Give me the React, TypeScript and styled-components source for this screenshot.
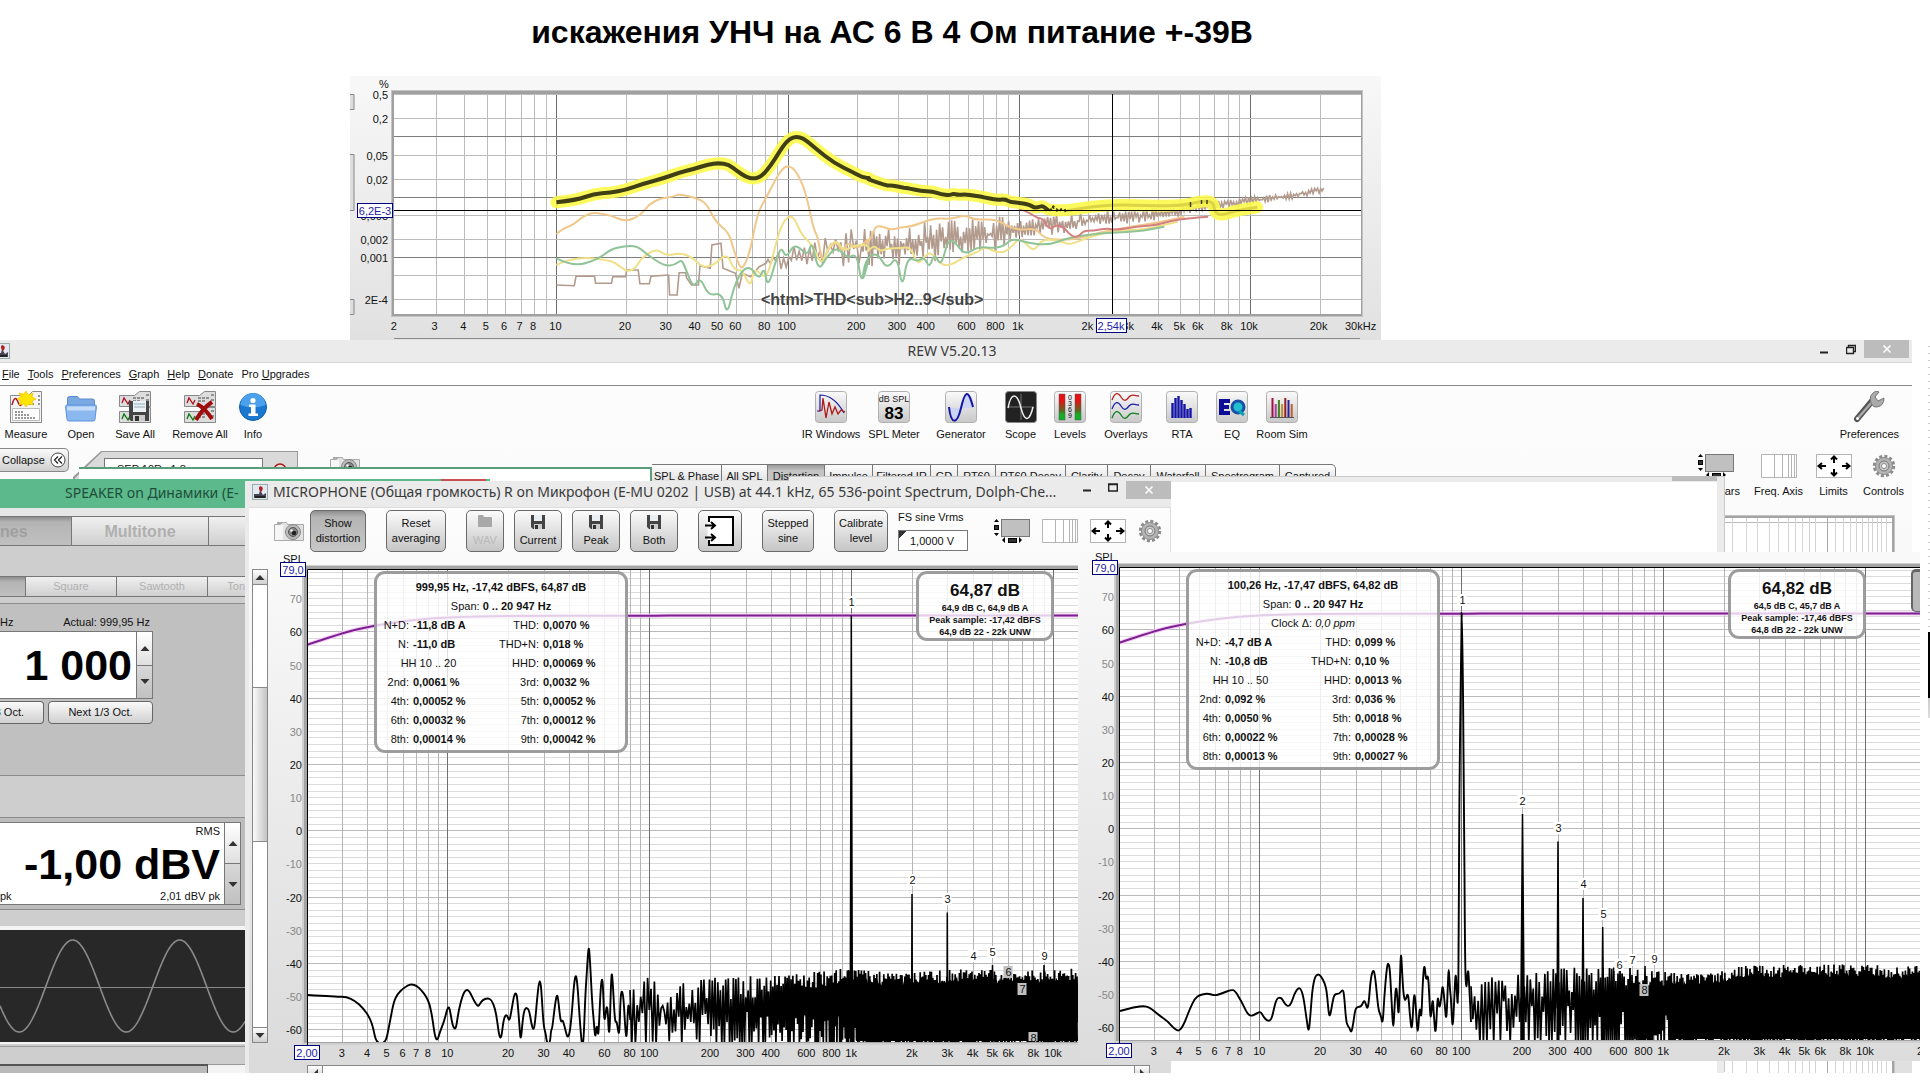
import React from "react";
import styled, { createGlobalStyle, css } from "styled-components";

const Global = createGlobalStyle`
  * { box-sizing: border-box; }
  html, body { margin: 0; padding: 0; background: #fff; }
  body { overflow: hidden; }
  button, input { font: inherit; color: inherit; }
`;

/* ---------- helpers ---------- */

type Pt = [number, number];

const makeRandom = (seed: number) => () => {
  seed = (seed * 1664525 + 1013904223) % 4294967296;
  return seed / 4294967296;
};

const toPath = (pts: Pt[]) =>
  pts.map((p, i) => `${i ? "L" : "M"}${p[0].toFixed(1)} ${p[1].toFixed(1)}`).join("");

const smoothPath = (pts: Pt[]) => {
  let d = `M${pts[0][0].toFixed(1)} ${pts[0][1].toFixed(1)}`;
  for (let i = 1; i < pts.length - 1; i++) {
    const mx = (pts[i][0] + pts[i + 1][0]) / 2;
    const my = (pts[i][1] + pts[i + 1][1]) / 2;
    d += `Q${pts[i][0].toFixed(1)} ${pts[i][1].toFixed(1)} ${mx.toFixed(1)} ${my.toFixed(1)}`;
  }
  const l = pts[pts.length - 1];
  return d + `L${l[0].toFixed(1)} ${l[1].toFixed(1)}`;
};

const pairs = (s: string): Pt[] => s.trim().split(/\s+/).map((p) => p.split(",").map(Number) as Pt);

const interpolate = (pts: Pt[], x: number) => {
  for (let i = 1; i < pts.length; i++) {
    if (x <= pts[i][0]) {
      const [x0, y0] = pts[i - 1];
      const [x1, y1] = pts[i];
      return y0 + ((y1 - y0) * (x - x0)) / (x1 - x0);
    }
  }
  return pts[pts.length - 1][1];
};

const frequencies = (max: number) => {
  const out: number[] = [];
  for (let d = 1; d <= 10000; d *= 10) for (let n = 1; n < 10; n++) if (n * d > 2 && n * d <= max) out.push(n * d);
  return out;
};
const isDecade = (f: number) => [10, 100, 1000, 10000].includes(f);

/* ---------- desktop ---------- */

const Desktop = styled.main`
  position: relative;
  min-height: 100vh;
  overflow: hidden;
  background: #fff;
  color: #111;
  font: 11px/15px "Liberation Sans", Arial, sans-serif;
`;
const Headline = styled.h1`
  margin: 0;
  padding: 12px 146px 0 0;
  text-align: center;
  font-size: 32px;
  line-height: 40px;
  font-weight: bold;
  color: #000;
`;
const Layer = styled.section<{ $x: number; $y: number; $w?: number; $right?: number; $h?: number }>`
  position: absolute;
  left: ${(p) => p.$x}px;
  top: ${(p) => p.$y}px;
  ${(p) => p.$w !== undefined && css`width: ${p.$w}px;`}
  ${(p) => p.$right !== undefined && css`right: ${p.$right}px;`}
  ${(p) => p.$h !== undefined && css`height: ${p.$h}px;`}
  overflow: hidden;
`;
const Block = styled.svg`
  display: block;
  flex: none;
`;

/* ---------- distortion chart ---------- */

const z1 = (s: string): Pt[] => pairs(s).map(([x, y]) => [340 + x / 2.958, y / 3]);
const z2 = (s: string): Pt[] => pairs(s).map(([x, y]) => [860 + x / 2.958, y / 3]);

const thdCurve = [
  ...z1("640,607 700,600 750,582 800,578 845,570 900,550 960,534 1000,519 1050,506 1090,493 1120,489 1150,494 1175,513 1200,531 1225,537 1250,527 1275,495 1300,455 1320,425 1340,411 1360,411 1380,422 1410,448 1460,488 1520,518 1545,532 1568,534"),
  ...z2("20,536 40,543 80,557 95,556 120,562 140,564 180,573 215,574 240,583 265,586 275,581 290,585 310,583 340,587 360,590 400,600 430,598 445,606 465,608 500,613 515,623 528,622 540,617 555,630"),
];
const highlight = [...thdCurve, ...z2("612,632 680,620 760,614 860,618 960,616 1000,605 1045,603 1050,640 1075,645 1110,632 1175,622")];
const harmonics: { color: string; pts: Pt[] }[] = [
  {
    color: "#f0c88c",
    pts: [
      ...z1("640,702 660,685 690,675 720,648 750,637 800,645 845,666 890,645 915,612 950,594 985,591 1000,582 1050,592 1085,610 1110,665 1150,697 1165,750 1185,810 1200,790 1215,745 1235,640 1260,595 1290,535 1310,505 1325,497 1345,507 1370,555 1385,610 1400,685 1415,715 1425,790 1445,745 1470,722 1485,760 1500,725 1530,750 1568,710"),
      ...z2("15,740 35,710 45,680 65,678 90,690 120,682 150,680 210,658 240,655 270,657 310,645 340,660 400,657 440,680 470,690 520,685 545,715 600,720 650,715 700,700 800,680 880,668 960,650"),
    ],
  },
  {
    color: "#f0e088",
    pts: [
      ...z1("640,795 690,770 800,780 830,800 850,815 875,805 890,775 935,745 965,768 1010,758 1045,775 1070,800 1100,800 1145,758 1165,810 1190,810 1215,865 1225,800 1260,840 1280,770 1300,690 1320,652 1342,648 1365,705 1395,730 1425,800 1445,740 1470,720 1490,755 1520,735 1568,735"),
      ...z2("20,760 40,735 60,755 80,745 120,745 150,740 170,795 190,770 210,755 240,795 270,795 310,770 350,755 370,740 410,760 440,750 470,715 490,730 515,755 540,715 600,725 620,735 680,710 760,690 840,690 940,665"),
    ],
  },
  {
    color: "#90c498",
    pts: [
      ...z1("640,775 690,800 760,780 800,748 840,738 880,738 910,765 960,798 990,795 1010,778 1020,800 1045,865 1065,830 1090,888 1130,878 1145,948 1165,860 1190,810 1215,800 1240,840 1255,800 1265,865 1290,780 1305,740 1320,775 1345,728 1385,770 1395,720 1415,815 1440,770 1470,740 1500,775 1530,760 1543,860 1568,760"),
      ...z2("5,855 15,780 50,755 80,810 110,765 125,870 140,770 170,785 190,770 205,805 220,760 240,800 260,720 280,725 310,765 350,740 400,745 430,735 450,715 500,730 560,735 610,715 700,700 820,695 900,680"),
    ],
  },
  { color: "#d48080", pts: z2("470,625 505,640 525,655 540,655 560,690 580,675 600,680 625,708 645,712 660,693 690,692 730,685 760,690 820,680 880,675 920,662 970,655 1030,650") },
];

const brownCurve = (() => {
  const rnd = makeRandom(11);
  const steps = z1(
    "640,855 693,857 698,829 753,829 756,850 803,850 807,830 845,830 848,810 882,810 887,851 915,851 920,829 972,825 975,885 997,885 1003,818 1022,818 1025,833 1040,855 1060,855 1065,797 1095,805 1100,735 1127,730 1133,805 1170,820 1180,865 1190,820 1215,830 1240,800 1260,790"
  );
  const mid: Pt[] = [[766, 262], [790, 258], [830, 250], [865, 247], [928, 242], [978, 237], [1029, 228], [1097, 219], [1150, 215], [1198, 208], [1225, 204], [1249, 201], [1283, 197], [1325, 189]];
  const amp: Pt[] = [[766, 9], [800, 14], [865, 21], [990, 20], [1030, 11], [1100, 8], [1200, 5], [1325, 3]];
  const tail: Pt[] = [];
  let sign = 1;
  for (let x = 768; x < 1325; x += x < 860 ? 2.6 : 1.5) {
    sign = -sign;
    tail.push([x, interpolate(mid, x) + sign * rnd() * interpolate(amp, x)]);
  }
  return toPath([...steps, ...tail]);
})();

const ThdChart = () => {
  const X = (f: number) => 556.4 + 231.2 * Math.log10(f / 10);
  const Y = (v: number) => 137.4 + 60.3 * Math.log10(0.1 / v);
  const yLabels: [number, string][] = [[0.5, "0,5"], [0.2, "0,2"], [0.05, "0,05"], [0.02, "0,02"], [0.005, "0,005"], [0.002, "0,002"], [0.001, "0,001"], [0.0002, "2E-4"]];
  const xLabels: [number, string][] = [
    [2, "2"], [3, "3"], [4, "4"], [5, "5"], [6, "6"], [7, "7"], [8, "8"], [10, "10"], [20, "20"], [30, "30"], [40, "40"], [50, "50"], [60, "60"], [80, "80"],
    [100, "100"], [200, "200"], [300, "300"], [400, "400"], [600, "600"], [800, "800"], [1000, "1k"], [2000, "2k"], [3000, "3k"], [4000, "4k"], [5000, "5k"], [6000, "6k"], [8000, "8k"], [10000, "10k"], [20000, "20k"],
  ];
  const dashes = z2("555,630 558,622 566,632 572,622 582,630 588,624 600,634 612,630");
  return (
    <Block width="1031" height="264" viewBox="350 76 1031 264" fontSize="11" fill="#111">
      <defs>
        <linearGradient id="thdBg" x2="0" y2="1">
          <stop offset="0" stopColor="#f8f8f8" />
          <stop offset="1" stopColor="#e1e1e1" />
        </linearGradient>
        <clipPath id="thdClip"><rect x="394" y="94" width="967" height="220" /></clipPath>
      </defs>
      <rect x="350" y="76" width="1031" height="264" fill="url(#thdBg)" />
      <path d="M350 94.5h4v15h-4M350 154.5h4v56h-4M350 299.5h4v15h-4" fill="#ddd" stroke="#888" />
      <rect x="391" y="90" width="972" height="227" fill="#c4c4c4" />
      <rect x="392" y="91" width="970" height="225" fill="#a0a0a0" />
      <rect x="394" y="94" width="967" height="220" fill="#fff" />
      <g clipPath="url(#thdClip)" fill="none">
        {frequencies(20000).map((f) => (
          <path key={f} d={`M${Math.round(X(f)) + 0.5} 94v220`} stroke={isDecade(f) ? "#6e6e6e" : "#bcbcbc"} />
        ))}
        {[0.5, 0.2, 0.1, 0.05, 0.02, 0.01, 0.005, 0.002, 0.001, 0.0005, 0.0002].map((v) => (
          <path key={v} d={`M394 ${Math.round(Y(v)) - 0.5}h967`} stroke={[0.1, 0.01, 0.001].includes(v) ? "#7c7c7c" : "#bcbcbc"} />
        ))}
        <path d={brownCurve} stroke="#b29a8c" strokeWidth="1.600" />
        {harmonics.map((h) => (
          <path key={h.color} d={smoothPath(h.pts)} stroke={h.color} strokeWidth="2" />
        ))}
        <path d={smoothPath(highlight)} stroke="#fbf84a" strokeWidth="12" strokeLinecap="round" strokeLinejoin="round" opacity="0.9" />
        <path d={smoothPath(highlight.slice(thdCurve.length))} stroke="#dcd444" strokeWidth="3" />
        <path d={smoothPath(thdCurve)} stroke="#403e14" strokeWidth="4" strokeLinejoin="round" />
        <path d={toPath(dashes)} stroke="#403e14" strokeWidth="3" strokeDasharray="2 3" />
        <path d="M1190.500 202v5M1201.500 200v4M1207 200v4" stroke="#403e14" strokeWidth="1.500" />
        <path d="M394 210.500h967M1112.500 94v222" stroke="#000" />
        <text x="761" y="305" fontSize="16" fontWeight="bold" fill="#444">{"<html>THD<sub>H2..9</sub>"}</text>
      </g>
      <path d="M394 338.500h966" stroke="#888" />
      <text x="379" y="88">%</text>
      {yLabels.map(([v, t]) => <text key={t} x="388" y={Y(v) + 4} textAnchor="end">{t}</text>)}
      {xLabels.map(([f, t]) => <text key={t} x={X(f) - 1} y="330" textAnchor="middle">{t}</text>)}
      <text x="1345" y="330">30kHz</text>
      <g fill="#fff" stroke="#000080"><rect x="357.500" y="203.500" width="35" height="14" /><rect x="1096.500" y="318.500" width="30" height="14" /></g>
      <g fill="#2222aa" textAnchor="middle"><text x="375" y="215">6,2E-3</text><text x="1111" y="330">2,54k</text></g>
    </Block>
  );
};

/* ---------- spectrum ---------- */

type Row = [string, string, string, string];
interface SpectrumData {
  id: string;
  width: number;
  plotWidth: number;
  low: Pt[];
  seed: number;
  noiseFrom: number;
  top: Pt[];
  solidFrom: number;
  peaks: [number, number, number][];
  marks: [string, number, number, boolean?][];
  header: string;
  clock?: string;
  hh: string;
  rows: Row[];
  level: [string, string, string, string];
}

const SpectrumFrame = styled.div<{ $w: number }>`
  position: relative;
  flex: none;
  width: ${(p) => p.$w}px;
`;
const FloatingBox = styled.div<{ $x: number; $w: number; $h: number }>`
  position: absolute;
  left: ${(p) => p.$x}px;
  top: 17px;
  width: ${(p) => p.$w}px;
  height: ${(p) => p.$h}px;
  border: 3px solid rgba(140, 140, 140, 0.85);
  border-radius: 11px;
  background: rgba(255, 255, 255, 0.78);
  text-align: center;
  white-space: nowrap;
`;
const Line = styled.div`
  line-height: 19px;
`;
const ReadingBox = styled(FloatingBox)`
  padding-top: 4px;
`;
const Readings = styled.table`
  border-collapse: collapse;
  table-layout: fixed;
  width: 100%;
  line-height: 19px;
  td, th { padding: 0; text-align: left; font-weight: bold; }
  th { text-align: right; font-weight: normal; padding-right: 4px; }
`;
const HhCell = styled.th`
  && { text-align: center; padding: 0; }
`;
const LevelBox = styled(FloatingBox)`
  padding-top: 7px;
  font-weight: bold;
  font-size: 9px;
  line-height: 12px;
`;
const BigLevel = styled.div`
  font-size: 17px;
  line-height: 20px;
  padding-bottom: 1px;
`;

const purple: Pt[] = pairs("39.3,90.7 74.7,78.7 105,71.7 138.7,66.7 180,63 239,61.7 382,61.8 420,61.3 840,61.5");

const Spectrum = ({ data }: { data: SpectrumData }) => {
  const X = (f: number) => 180.3 + 201.9 * Math.log10(f / 10);
  const Y = (db: number) => 276.3 - 3.315 * db;
  const left = 39.5;
  const right = data.plotWidth;
  const bottom = 487;
  const rnd = makeRandom(data.seed);
  const noise: Pt[] = [];
  for (let x = data.noiseFrom; x < right; ) {
    const k = Math.min(1, (x - data.noiseFrom) / 210);
    noise.push([x, interpolate(data.top, x) - 2 + Math.pow(rnd(), 1.2) * (34 - 20 * k)]);
    x += 1.8 - 1.1 * k;
    noise.push([x, Math.min(bottom + 4, 444 + 18 * k + rnd() * (64 + 10 * k))]);
    x += 1.8 - 1.1 * k;
  }
  const solid: Pt[] = [[data.solidFrom, bottom]];
  for (let x = data.solidFrom; x < right; x += 1.2) solid.push([x, interpolate(data.top, x) + 6 + rnd() * 6]);
  solid.push([right, bottom]);
  const lines: number[] = [];
  for (let db = 78; db >= -62; db -= 2) lines.push(db);
  const yTicks = [70, 60, 50, 40, 30, 20, 10, 0, -10, -20, -30, -40, -50, -60];
  const xTicks: [number, string][] = [
    [3, "3"], [4, "4"], [5, "5"], [6, "6"], [7, "7"], [8, "8"], [10, "10"], [20, "20"], [30, "30"], [40, "40"], [60, "60"], [80, "80"], [100, "100"],
    [200, "200"], [300, "300"], [400, "400"], [600, "600"], [800, "800"], [1000, "1k"], [2000, "2k"], [3000, "3k"], [4000, "4k"], [5000, "5k"], [6000, "6k"], [8000, "8k"], [10000, "10k"], [20000, "20k"],
  ].filter(([f]) => X(f as number) < data.width + 10) as [number, string][];
  const clip = `clip-${data.id}`;
  return (
    <SpectrumFrame $w={data.width}>
      <Block width={data.width} height="509" fontSize="11" fill="#111">
        <defs><clipPath id={clip}><rect x={left} y="15" width={right - left} height="473" /></clipPath></defs>
        <rect x="34" y="11" width={right - 34} height="480" fill="#cfcfcf" />
        <rect x="36" y="12" width={right - 36} height="477" fill="#a4a4a4" />
        <rect x={left} y="15" width={right - left} height="473" fill="#fff" />
        <g clipPath={`url(#${clip})`} fill="none">
          {lines.map((db) => <path key={db} d={`M${left} ${Math.round(Y(db)) + 0.5}H${right}`} stroke={db % 20 === 0 ? "#bababa" : "#dcdcdc"} />)}
          {frequencies(10000).map((f) => <path key={f} d={`M${Math.round(X(f)) - 0.5} 15v473`} stroke={isDecade(f) ? "#707070" : "#b6b6b6"} />)}
          <path d={smoothPath(purple)} stroke="#f4c8f4" strokeWidth="4" />
          <path d={smoothPath(purple)} stroke="#7c2290" strokeWidth="2" />
          <path d={smoothPath(data.low)} stroke="#000" strokeWidth="1.900" />
          <path d={toPath(noise)} stroke="#000" strokeWidth="1.700" />
          <path d={toPath(solid)} fill="#000" />
          {data.peaks.map(([x, y, w]) => <path key={x} d={`M${x} ${y}L${x + w} 440V488H${x - w}V440Z`} fill="#000" stroke="#000" strokeWidth="1.500" />)}
        </g>
        <path d={`M39.500 492V15.500H${right}`} fill="none" stroke="#000" />
        {data.marks.map(([t, x, y, dark]) => (
          <g key={t}>
            <rect x={x - 5} y={y - 6} width="9" height={Math.min(12, 487 - y + 6)} fill={dark ? "#c0c0c0" : "#fff"} />
            <text x={x} y={y + 4} textAnchor="middle">{t}</text>
          </g>
        ))}
        <text x="15" y="9">SPL</text>
        {yTicks.map((db) => <text key={db} x="34" y={Y(db) + 5} textAnchor="end" fill={db % 20 === 0 ? "#111" : "#888"}>{db}</text>)}
        {xTicks.map(([f, t]) => <text key={t} x={X(f) - 1} y="503" textAnchor="middle">{t}</text>)}
        <g fill="#fff" stroke="#000080"><rect x="12.500" y="8.500" width="25" height="14" /><rect x="26.500" y="491.500" width="25" height="14" /></g>
        <g fill="#2222aa" textAnchor="middle"><text x="25" y="20">79,0</text><text x="39" y="503">2,00</text></g>
      </Block>
      <ReadingBox $x={106} $w={254} $h={data.clock ? 201 : 182}>
        <Line><b>{data.header}</b></Line>
        <Line>Span: <b>0 .. 20 947 Hz</b></Line>
        {data.clock && <Line>Clock Δ: <i>{data.clock}</i></Line>}
        <Readings>
          <colgroup><col width="36" /><col width="67" /><col width="63" /><col /></colgroup>
          <tbody>
            {data.rows.map(([a, b, c, d]) => (
              <tr key={c}>
                {a === "HH" ? <HhCell colSpan={2}>{data.hh}</HhCell> : <><th>{a}</th><td>{b}</td></>}
                <th>{c}</th>
                <td>{d}</td>
              </tr>
            ))}
          </tbody>
        </Readings>
      </ReadingBox>
      <LevelBox $x={648} $w={138} $h={70}>
        <BigLevel>{data.level[0]}</BigLevel>
        {data.level.slice(1).map((t) => <div key={t}>{t}</div>)}
      </LevelBox>
    </SpectrumFrame>
  );
};

const first: SpectrumData = {
  id: "a",
  width: 812,
  plotWidth: 810,
  low: pairs(
    "203,705 290,710 320,711 345,722 370,745 390,775 400,805 409,850 437,850 447,800 460,730 472,702 490,685 505,675 515,673 530,677 545,692 558,708 570,735 578,780 585,830 592,842 600,815 612,785 622,745 628,740 634,775 640,803 648,808 656,750 668,705 678,688 688,693 702,722 713,739 718,735 727,720 743,714 755,720 765,745 772,785 778,830 784,835 790,785 796,765 802,766 808,785 814,755 822,705 828,698 832,715 838,790 842,848 848,780 853,750 860,742 868,752 874,790 880,812 885,790 891,720 897,664 902,664 906,720 911,800 917,820 921,850 930,850 933,810 937,805 944,740 950,705 954,710 962,790 968,778 975,805 982,833 988,825 994,780 1002,670 1008,640 1013,680 1020,790 1026,860 1030,860 1035,730 1040,640 1046,550 1050,600 1056,720 1061,780 1066,840 1070,790 1074,825 1076,815 1082,680 1087,650 1090,700 1093,800 1102,715 1108,860 1114,630 1118,660 1125,790 1130,780 1138,840 1142,690 1150,700 1156,810 1160,840 1165,715 1171,780"
  ).map(([x, y]) => [x / 3 - 28, y / 3 + 206]),
  seed: 5,
  noiseFrom: 362,
  top: [[362, 432], [375, 430], [382, 422], [390, 430], [420, 427], [480, 424], [560, 419], [583, 415], [620, 421], [700, 417], [760, 418], [810, 416]],
  solidFrom: 588,
  peaks: [[583.3, 61.5, 1], [644, 340, 0.3], [679.3, 358.4, 0.3], [724.5, 411, 0.5], [776, 411, 0.5]],
  marks: [["1", 583.5, 48], ["2", 644.5, 326], ["3", 679.5, 345], ["4", 705.5, 402], ["5", 724.5, 398], ["6", 740.5, 418, true], ["7", 754.5, 435, true], ["8", 765.5, 484, true], ["9", 776.5, 402]],
  header: "999,95 Hz, -17,42 dBFS, 64,87 dB",
  hh: "HH 10 .. 20",
  rows: [
    ["N+D:", "-11,8 dB A", "THD:", "0,0070 %"],
    ["N:", "-11,0 dB", "THD+N:", "0,018 %"],
    ["HH", "", "HHD:", "0,00069 %"],
    ["2nd:", "0,0061 %", "3rd:", "0,0032 %"],
    ["4th:", "0,00052 %", "5th:", "0,00052 %"],
    ["6th:", "0,00032 %", "7th:", "0,00012 %"],
    ["8th:", "0,00014 %", "9th:", "0,00042 %"],
  ],
  level: ["64,87 dB", "64,9 dB C, 64,9 dB A", "Peak sample: -17,42 dBFS", "64,9 dB 22 - 22k UNW"],
};

/* The fundamental at 100 Hz is wide enough to show both of its flanks. */
const fundamental: Pt[] = [[378, 440], [378.5, 440], [379.3, 238], [381.7, 61], [381.7, 61], [382.2, 61], [384, 238], [385, 410], [386.3, 442], [388, 412], [389.5, 440], [391, 470]];

const second: SpectrumData = {
  id: "b",
  width: 840,
  plotWidth: 840,
  low: [
    ...pairs(
      "120,663 150,655 180,649 200,649 215,657 240,678 262,693 280,713 293,723 303,718 315,695 330,655 345,625 358,615 382,610 406,617 425,610 455,599 465,602 485,635 500,668 512,679 525,673 541,664 548,675 556,688 568,694 576,683 582,655 590,626 600,622 607,628 617,645 626,649 634,640 643,612 655,593 664,598 672,630 680,690 686,730 691,680 697,600 704,562 713,552 722,557 735,580 741,610 746,670 750,680 757,640 763,612 778,612 788,598 792,610 798,690 803,708 808,712 814,730 820,700 825,660 832,650 844,650 852,630 857,640 862,658 866,640 872,565 880,536 886,560 895,660 902,675 908,706 913,620 920,535 925,516 930,540 935,640 940,730 944,640 948,585 952,620 956,690 960,560 963,480 966,540 970,610 976,637 984,602 990,680 996,730 1002,600 1007,640 1013,750 1019,640 1024,695 1028,580 1033,515 1038,575 1044,550 1048,620 1052,700 1058,615 1062,680 1067,745 1073,606 1078,660 1084,625 1088,578 1094,640 1099,700 1103,600 1106,520 1110,600 1113,625 1118,730 1123,620 1127,540 1130,600 1133,650"
    ).map(([x, y]): Pt => [x / 3, y / 3 + 238]),
    ...fundamental,
  ],
  seed: 23,
  noiseFrom: 391,
  top: [[391, 430], [410, 426], [455, 422], [470, 418], [540, 417], [575, 421], [620, 424], [660, 416], [740, 414], [800, 415], [840, 416]],
  solidFrom: 590,
  peaks: [[442.5, 262, 1.5], [478, 289.5, 0.8], [503, 346, 0.7], [522.7, 375, 0.6], [565, 414, 0.5]],
  marks: [["1", 382.5, 48], ["2", 442.5, 249], ["3", 478.5, 276], ["4", 503.5, 332], ["5", 523.5, 362], ["6", 539.5, 413], ["7", 552.5, 408], ["8", 564.5, 438, true], ["9", 574.5, 407]],
  header: "100,26 Hz, -17,47 dBFS, 64,82 dB",
  clock: "0,0 ppm",
  hh: "HH 10 .. 50",
  rows: [
    ["N+D:", "-4,7 dB A", "THD:", "0,099 %"],
    ["N:", "-10,8 dB", "THD+N:", "0,10 %"],
    ["HH", "", "HHD:", "0,0013 %"],
    ["2nd:", "0,092 %", "3rd:", "0,036 %"],
    ["4th:", "0,0050 %", "5th:", "0,0018 %"],
    ["6th:", "0,00022 %", "7th:", "0,00028 %"],
    ["8th:", "0,00013 %", "9th:", "0,00027 %"],
  ],
  level: ["64,82 dB", "64,5 dB C, 45,7 dB A", "Peak sample: -17,46 dBFS", "64,8 dB 22 - 22k UNW"],
};

/* ---------- window chrome ---------- */

const TitleBar = styled.header<{ $h: number; $bg: string; $pad?: number; $color?: string }>`
  display: flex;
  flex: none;
  align-items: flex-start;
  height: ${(p) => p.$h}px;
  padding-left: ${(p) => p.$pad ?? 0}px;
  background: ${(p) => p.$bg};
  font: 14px/22px "Noto Sans", "Open Sans", sans-serif;
  color: ${(p) => p.$color ?? "#3a3a3a"};
  white-space: nowrap;
`;
const TitleText = styled.span<{ $centered?: boolean; $line?: number }>`
  flex: 1;
  overflow: hidden;
  padding-right: ${(p) => (p.$centered ? 8 : 0)}px;
  text-align: ${(p) => (p.$centered ? "center" : "left")};
  line-height: ${(p) => p.$line ?? 22}px;
`;
const WinButton = styled.button<{ $close?: boolean }>`
  display: flex;
  justify-content: center;
  padding: 0;
  border: 0;
  width: ${(p) => (p.$close ? 45 : 26)}px;
  height: ${(p) => (p.$close ? 18 : 16)}px;
  background: ${(p) => (p.$close ? "#bcbcbc" : "transparent")};
`;
const ButtonsRow = styled.div`
  display: flex;
  justify-content: space-between;
`;
const CloseGlyph = () => <Block width="10" height="18"><path d="M1.500 5.500l7 7M8.500 5.500l-7 7" stroke="#fff" strokeWidth="1.600" /></Block>;

const JavaIcon = () => (
  <Block width="16" height="16">
    <rect x="0.500" y="0.500" width="15" height="15" fill="#e4e8f0" stroke="#9aa" />
    <path d="M2 10h5l1-4 3 5 3-2v5H2z" fill="#445" />
    <path d="M8 2c4 1 3 4 1 6-2-2-3-4-1-6z" fill="#b02020" />
    <path d="M3 13h10" stroke="#222" strokeWidth="2" />
  </Block>
);

/* ---------- icons ---------- */

const CameraIcon = () => (
  <Block width="30" height="22" viewBox="0 0 30 22">
    <path d="M0.500 4.500h6l1-2h5l1 2h16v16h-29z" fill="#e2e2e2" stroke="#aaa" />
    <path d="M1 5h8v15H1z" fill="#f6f6f6" />
    <path d="M3 2h5v2H3z" fill="#aaa" />
    <circle cx="19" cy="12" r="7.500" fill="#bbb" stroke="#888" />
    <circle cx="19" cy="12" r="4.500" fill="#888" stroke="#555" />
    <circle cx="20" cy="13" r="2.300" fill="#222" />
    <circle cx="17.500" cy="10.500" r="1.200" fill="#fff" />
  </Block>
);
const ScrollbarsIcon = () => (
  <Block width="36" height="24" viewBox="0 0 36 24">
    <rect x="7.500" y="0.500" width="28" height="17" fill="#c0c0c0" stroke="#777" />
    <path d="M0 3l2.500-3L5 3zM0 14l2.500 3L5 14zM8 21l3-3v6zM28 21l-3-3v6z" fill="#000" />
    <rect x="0.500" y="6.500" width="4" height="4" fill="#333" stroke="#000" />
    <rect x="14.500" y="19.500" width="8" height="4" fill="#333" stroke="#000" />
  </Block>
);
const FreqAxisIcon = () => (
  <Block width="36" height="24"><path d="M0.500 0.500h35v23h-35zM13.500 0v24M21.500 0v24M27.500 0v24M30.500 0v24M33.500 0v24" fill="#fff" stroke="#b4b4b4" /></Block>
);
const LimitsIcon = () => (
  <Block width="36" height="24">
    <rect x="0.500" y="0.500" width="35" height="23" fill="#fff" stroke="#b4b4b4" />
    <path d="M18 3v6M15 5.500l3-3 3 3M18 21v-6M15 18.500l3 3 3-3M3 12h7M6 9l-3.500 3L6 15M33 12h-7M30 9l3.500 3-3.500 3" fill="none" stroke="#000" strokeWidth="2" />
  </Block>
);
const GearIcon = () => (
  <Block width="24" height="24">
    <circle cx="12" cy="12" r="9.700" fill="none" stroke="#8c8c8c" strokeWidth="3" strokeDasharray="3 2.080" />
    <circle cx="12" cy="12" r="8.500" fill="#b4b4b4" stroke="#8c8c8c" />
    <circle cx="12" cy="12" r="5" fill="#c8c8c8" stroke="#777" />
    <circle cx="12" cy="12" r="2.500" fill="#fff" stroke="#888" />
  </Block>
);
const Sheet = ({ y }: { y: number }) => (
  <g transform={`translate(0 ${y})`}>
    <path d="M0.500 4.500h15l5-4h11v15h-31z" fill="#ddd" stroke="#888" />
    <path d="M3 12l2-5 4 6 2-4" fill="none" stroke={y ? "#0a7a0a" : "#b01020"} strokeWidth="1.300" />
    <path d="M14 7h11M14 10h8M27 4h3M27 9h3" stroke="#444" strokeDasharray="3 1" />
  </g>
);
const MeasureIcon = () => (
  <Block width="32" height="32">
    <path d="M0.500 4.500h18l4-4h9v31h-31z" fill="#f4f4f4" stroke="#888" />
    <path d="M2.500 17.500h27v12h-27z" fill="#fff" stroke="#bbb" />
    <path d="M5 21h8M5 24h14M5 27h20M19 13h6M28 5h2M28 9h2M28 13h2" stroke="#333" strokeDasharray="2 1" />
    <path d="M2 14c2-8 4-8 6-3s3 5 5-2" fill="none" stroke="#b01020" strokeWidth="1.500" />
    <path d="M16 0l2 4 5-2-1 4 4 2-4 2 1 4-5-1-2 3-2-3-5 1 2-4-4-2 4-2-2-4 5 1z" fill="#ffe400" stroke="#f0c000" strokeWidth="0.700" />
  </Block>
);
const FolderIcon = () => (
  <Block width="32" height="32">
    <path d="M2.500 18V7.500q0-2 2-2h8l2 2.500h13q2 0 2 2v8z" fill="#7aa8e0" stroke="#5a8cd0" />
    <path d="M0.500 15.500q0-1.500 1.500-1.500h28q1.500 0 1.500 1.500L30 28q0 2-2 2H4q-2 0-2-2z" fill="#8cb8f0" stroke="#5a90d8" />
    <path d="M2 15.500h28v4H2z" fill="#c4dcf8" />
  </Block>
);
const SaveAllIcon = () => (
  <Block width="32" height="32">
    <Sheet y={0} /><Sheet y={16} />
    <path d="M10 10h20v20H12l-2-2z" fill="#444" />
    <path d="M14 10h13v11H14z" fill="#e8f2f8" />
    <path d="M15 13h11M15 16h11" stroke="#9ab" />
    <path d="M14 24h12v6H14z" fill="#ccc" /><path d="M16 25h4v5h-4z" fill="#333" />
  </Block>
);
const RemoveAllIcon = () => (
  <Block width="32" height="32">
    <Sheet y={0} /><Sheet y={16} />
    <path d="M13 13q8 4 15 15M28 11q-9 6-16 18" fill="none" stroke="#a00c0c" strokeWidth="4" />
  </Block>
);
const InfoIcon = () => (
  <Block width="28" height="32">
    <circle cx="14" cy="16" r="13.500" fill="#1a78d0" stroke="#0f5cb0" />
    <path d="M1.500 14a12.500 12 0 0 1 25 0q-12 5-25 0z" fill="#4aa0ea" />
    <circle cx="14" cy="9.500" r="2.600" fill="#fff" />
    <path d="M10 13.500h6.500v9H19V25h-9.500v-2.500H12V16h-2z" fill="#fff" />
  </Block>
);
const Plate = ({ children, dark }: { children: React.ReactNode; dark?: boolean }) => (
  <Block width="32" height="32">
    <defs><linearGradient id="plate" x2="0" y2="1"><stop offset="0" stopColor="#fafafa" /><stop offset="1" stopColor="#c8c8c8" /></linearGradient></defs>
    <rect x="0.500" y="0.500" width="31" height="31" rx="3" fill={dark ? "#222" : "url(#plate)"} stroke={dark ? "#888" : "#b0b0b0"} />
    {children}
  </Block>
);
const IrIcon = () => (
  <Plate>
    <path d="M2 20h3V4q14 0 24 18" fill="none" stroke="#1818a0" strokeWidth="1.200" />
    <path d="M4 20l3-1 1-12 3 20 3-16 3 12 3-7 3 7 3-4 4 2" fill="none" stroke="#b01818" strokeWidth="1.300" />
  </Plate>
);
const SplIcon = () => (
  <Plate>
    <text x="16" y="11" fontSize="9" textAnchor="middle" fill="#222">dB SPL</text>
    <text x="16" y="28" fontSize="17" fontWeight="bold" textAnchor="middle">83</text>
  </Plate>
);
const GeneratorIcon = () => (
  <Plate>
    <path d="M4 17h12c-4 14-8 14-12 0zM17 17C21-1 25 0 28 17z" fill="#ccd4f4" />
    <path d="M4 16c2 18 8 18 12 1S23-3 28 16" fill="none" stroke="#1414a8" strokeWidth="2" />
  </Plate>
);
const ScopeIcon = () => (
  <Plate dark>
    <path d="M16 3v26M3 16h26" stroke="#777" />
    <path d="M3 17c3-16 9-16 13 0s9 12 12-1" fill="none" stroke="#eee" strokeWidth="1.500" />
  </Plate>
);
const LevelsIcon = () => (
  <Plate>
    <defs><linearGradient id="meter" x2="0" y2="1"><stop offset="0.250" stopColor="#e81010" /><stop offset="0.650" stopColor="#5a6a20" /><stop offset="0.800" stopColor="#10b020" /></linearGradient></defs>
    <path d="M5 3h6v26H5zM21 3h6v26h-6z" fill="url(#meter)" stroke="#556" strokeWidth="0.500" />
    {["0", "3", "6", "9"].map((t, i) => <text key={t} x="16" y={9 + i * 6} fontSize="7" textAnchor="middle">{t}</text>)}
  </Plate>
);
const OverlaysIcon = () => (
  <Plate>
    {([["#b82020", 9], ["#2020a8", 18], ["#108020", 27]] as [string, number][]).map(([c, y]) => (
      <path key={c} d={`M2 ${y}c3-8 6-8 9-3s5 4 8 0 5-1 10-1`} fill="none" stroke={c} strokeWidth="1.300" />
    ))}
  </Plate>
);
const RtaIcon = () => <Plate><path d="M6.500 27V12M9.500 27V7M12.500 27V5M15.500 27V9M18.500 27V13M21.500 27V18M24.500 27V17" stroke="#1414a8" strokeWidth="2.400" /></Plate>;
const EqIcon = () => (
  <Plate>
    <path d="M3 8h11v4H8v2h5v4H8v2h6v4H3z" fill="#0c0c98" />
    <circle cx="22" cy="16" r="6" fill="#20c0d0" stroke="#1850a8" strokeWidth="3" />
    <path d="M23 20l5 4" stroke="#10a0b8" strokeWidth="3" />
  </Plate>
);
const RoomSimIcon = () => (
  <Plate>
    {["#a01040", "#a040a0", "#408020", "#c09030", "#902020", "#2020a0", "#c06030"].map((c, i) => (
      <path key={c} d={`M${6.5 + i * 3.2} 26V${[7, 13, 9, 13, 7, 9, 13][i]}`} stroke={c} strokeWidth="2" />
    ))}
    <path d="M4 26.500h24" stroke="#555" />
  </Plate>
);
const WrenchIcon = () => (
  <Block width="32" height="32">
    <path d="M4 28L19 10" stroke="#555" strokeWidth="6" strokeLinecap="round" />
    <path d="M5 27L19 11" stroke="#aaa" strokeWidth="2.500" />
    <circle cx="4.500" cy="27.500" r="1.500" fill="#fff" />
    <path d="M18 12q-3-8 5-12l3 1-4 5 3 4 6-3q0 8-7 9-4 1-6-4z" fill="#aaa" stroke="#777" />
  </Block>
);
const FloppyIcon = () => (
  <Block width="16" height="16">
    <path d="M1 1h14v14H3l-2-2z" fill="#444" /><path d="M4 1h8v6H4z" fill="#e8eef4" /><path d="M4 10h8v5H4z" fill="#ccc" /><path d="M5 11h3v4H5z" fill="#333" />
  </Block>
);

/* ---------- REW main window ---------- */

const RewWindow = styled(Layer)`
  display: flex;
  flex-direction: column;
  background: linear-gradient(#fcfcfc 45px, #fbfbfb 160px, #e0e0e0);
`;
const MenuBar = styled.nav`
  display: flex;
  flex: none;
  gap: 8px;
  height: 24px;
  padding: 4px 2px 0;
  background: #fff;
  border-top: 1px solid #d4d4d4;
  border-bottom: 1px solid #8a8a8a;
  line-height: 14px;
`;
const MenuItem = styled.a`
  color: #111;
  text-decoration: none;
`;
const MainToolbar = styled.div`
  display: grid;
  flex: none;
  grid-template-columns: 800px auto 1fr;
  height: 62px;
  padding-top: 5px;
`;
const ToolGroup = styled.div<{ $cols: string }>`
  display: grid;
  grid-template-columns: ${(p) => p.$cols};
  justify-content: start;
`;
const PrefGroup = styled.div`
  display: flex;
  justify-content: flex-end;
  padding-right: 13px;
`;
const Tool = styled.button`
  display: flex;
  flex-direction: column;
  align-items: center;
  gap: 4px;
  padding: 0;
  border: 0;
  background: none;
  white-space: nowrap;
  line-height: 15px;
  height: 52px;
  min-width: 0;
`;
const ToolLabel = styled.span`
  flex: none;
`;
const GraphRow = styled.div`
  display: flex;
  flex: none;
  align-items: flex-start;
  height: 67px;
`;
const CollapseButton = styled.button`
  display: flex;
  align-items: center;
  gap: 5px;
  width: 69px;
  height: 24px;
  padding: 0 0 0 2px;
  border: 1px solid #888;
  border-left: 0;
  border-radius: 0 5px 5px 0;
  background: linear-gradient(#fafafa, #cfcfcf);
`;
const MeasurementTab = styled.div`
  width: 225px;
  height: 67px;
  margin: 3px 0 0 4px;
  padding: 1px 1px 0 0;
  background: #999;
  clip-path: polygon(28px 0, 100% 0, 100% 100%, 0 100%, 0 26px);
`;
const MeasurementInner = styled.div`
  display: flex;
  align-items: flex-start;
  gap: 10px;
  height: 100%;
  padding: 6px 0 0 31px;
  background: #dadada;
  clip-path: polygon(29px 0, 100% 0, 100% 100%, 0 100%, 2px 26px);
`;
const NameInput = styled.input`
  width: 159px;
  height: 22px;
  padding: 2px 12px;
  border: 1px solid #777;
  background: #fff;
`;
const CameraSlot = styled.div`
  width: 354px;
  padding: 7px 0 0 32px;
`;
const TabStrip = styled.div`
  display: flex;
  margin-top: 16px;
`;
const GraphTab = styled.button<{ $w: number; $on?: boolean }>`
  width: ${(p) => p.$w}px;
  height: 24px;
  padding: 0;
  border: solid #777;
  border-width: 1px 1px 1px 0;
  background: ${(p) => (p.$on ? "linear-gradient(#999, #c4c4c4 6px)" : "linear-gradient(#fdfdfd, #d8d8d8)")};
  white-space: nowrap;
  line-height: 13px;
  &:last-child { border-radius: 0 5px 0 0; }
`;
const GraphTools = styled.div`
  display: grid;
  flex: 1;
  grid-template-columns: 63px 63px 47px 53px;
  justify-content: end;
  padding: 6px 2px 0 0;
  ${Tool} { gap: 6px; }
`;
const PlotRow = styled.div`
  display: flex;
  justify-content: flex-end;
  flex: 1;
  min-height: 0;
  padding-right: 17px;
`;

const HiddenPlot = () => (
  <Block width="180" height="560">
    <rect width="180" height="560" fill="#c4c4c4" />
    <rect width="179" height="560" y="1" fill="#a4a4a4" />
    <rect width="177" height="560" y="3" fill="#fff" />
    <path d="M0 7.500h177" stroke="#bbb" />
    {[17, 31, 42, 54, 63, 73, 80, 87, 94, 100, 112, 120, 128, 135, 141, 147, 153, 157, 162, 166, 171].map((x) => (
      <path key={x} d={`M${x + 0.5} 3v557`} stroke={x === 112 ? "#aaa" : "#d4d4d4"} />
    ))}
  </Block>
);

const ToolButton = ({ icon, label }: { icon: React.ReactNode; label: string }) => (
  <Tool type="button">{icon}<ToolLabel>{label}</ToolLabel></Tool>
);

const Rew = () => (
  <RewWindow $x={0} $y={340} $right={18} $h={733}>
    <TitleBar $h={22} $bg="#ebebeb">
      <Layer as="span" $x={-6} $y={3} $w={16}><JavaIcon /></Layer>
      <TitleText $centered>REW V5.20.13</TitleText>
      <Layer as="div" $x={1811} $y={0} $w={98}>
        <ButtonsRow>
          <WinButton type="button" aria-label="Minimize"><Block width="8" height="16"><path d="M0 12.500h8" stroke="#222" strokeWidth="2" /></Block></WinButton>
          <WinButton type="button" aria-label="Restore"><Block width="10" height="16"><path d="M0.500 7.500h7v6h-7zM2.500 7.500v-2h7v6h-2" fill="none" stroke="#222" strokeWidth="1.400" /></Block></WinButton>
          <WinButton type="button" aria-label="Close" $close><CloseGlyph /></WinButton>
        </ButtonsRow>
      </Layer>
    </TitleBar>
    <MenuBar>
      {["File", "Tools", "Preferences", "Graph", "Help", "Donate"].map((t) => <MenuItem key={t} href="#"><u>{t[0]}</u>{t.slice(1)}</MenuItem>)}
      <MenuItem href="#">Pro <u>U</u>pgrades</MenuItem>
    </MenuBar>
    <MainToolbar>
      <ToolGroup $cols="52px 58px 50px 80px 26px">
        <ToolButton icon={<MeasureIcon />} label="Measure" />
        <ToolButton icon={<FolderIcon />} label="Open" />
        <ToolButton icon={<SaveAllIcon />} label="Save All" />
        <ToolButton icon={<RemoveAllIcon />} label="Remove All" />
        <ToolButton icon={<InfoIcon />} label="Info" />
      </ToolGroup>
      <ToolGroup $cols="62px 64px 70px 49px 50px 62px 50px 50px 50px">
        <ToolButton icon={<IrIcon />} label="IR Windows" />
        <ToolButton icon={<SplIcon />} label="SPL Meter" />
        <ToolButton icon={<GeneratorIcon />} label="Generator" />
        <ToolButton icon={<ScopeIcon />} label="Scope" />
        <ToolButton icon={<LevelsIcon />} label="Levels" />
        <ToolButton icon={<OverlaysIcon />} label="Overlays" />
        <ToolButton icon={<RtaIcon />} label="RTA" />
        <ToolButton icon={<EqIcon />} label="EQ" />
        <ToolButton icon={<RoomSimIcon />} label="Room Sim" />
      </ToolGroup>
      <PrefGroup><ToolButton icon={<WrenchIcon />} label="Preferences" /></PrefGroup>
    </MainToolbar>
    <GraphRow>
      <CollapseButton type="button">
        <span>Collapse</span>
        <Block width="16" height="16"><circle cx="8" cy="8" r="7" fill="#fff" stroke="#444" /><path d="M8 4.500L4.500 8 8 11.500M12 4.500L8.500 8l3.500 3.500" fill="none" stroke="#222" strokeWidth="1.300" /></Block>
      </CollapseButton>
      <MeasurementTab>
        <MeasurementInner>
          <NameInput aria-label="Measurement name" defaultValue="SEP 10R x1.8" />
          <Block width="14" height="22"><circle cx="7" cy="12" r="6" fill="#f4dcdc" stroke="#a02020" strokeWidth="1.500" /><path d="M4.500 9.500l5 5M9.500 9.500l-5 5" stroke="#a02020" strokeWidth="1.500" /></Block>
        </MeasurementInner>
      </MeasurementTab>
      <CameraSlot><CameraIcon /></CameraSlot>
      <TabStrip>
        {([["SPL & Phase", 70], ["All SPL", 46], ["Distortion", 57], ["Impulse", 48], ["Filtered IR", 58], ["GD", 27], ["RT60", 38], ["RT60 Decay", 70], ["Clarity", 42], ["Decay", 43], ["Waterfall", 55], ["Spectrogram", 74], ["Captured", 56]] as [string, number][]).map(
          ([t, w]) => <GraphTab key={t} type="button" $w={w} $on={t === "Distortion"}>{t}</GraphTab>
        )}
      </TabStrip>
      <GraphTools>
        <ToolButton icon={<ScrollbarsIcon />} label="Scrollbars" />
        <ToolButton icon={<FreqAxisIcon />} label="Freq. Axis" />
        <ToolButton icon={<LimitsIcon />} label="Limits" />
        <ToolButton icon={<GearIcon />} label="Controls" />
      </GraphTools>
    </GraphRow>
    <PlotRow><HiddenPlot /></PlotRow>
  </RewWindow>
);

/* ---------- generator window ---------- */

const SpeakerWindow = styled(Layer)`
  display: flex;
  flex-direction: column;
  background: #cecece;
`;
const SpeakerTabs = styled.div<{ $big?: boolean }>`
  display: flex;
  flex: none;
  height: ${(p) => (p.$big ? 38 : 21)}px;
  margin-top: ${(p) => (p.$big ? 0 : 30)}px;
  border-top: ${(p) => (p.$big ? "8px solid #e6e6e6" : "0")};
`;
const SpeakerTab = styled.button<{ $w: number; $on?: boolean; $big?: boolean }>`
  flex: none;
  width: ${(p) => p.$w}px;
  padding: 0;
  text-align: ${(p) => (p.$on ? "left" : "center")};
  border: solid #777;
  border-width: 1px 1px 1px 0;
  background: ${(p) => (p.$on ? "linear-gradient(#8c8c8c, #b4b4b4 5px, #c0c0c0)" : "linear-gradient(#f0f0f0, #cfcfcf)")};
  color: ${(p) => (p.$on ? "#a0a0a0" : "#b0b0b0")};
  ${(p) => p.$big && css`font-size: 16px; font-weight: bold;`}
`;
const FrequencyPanel = styled.div`
  flex: none;
  height: 173px;
  margin-top: 6px;
  padding-top: 11px;
  border: solid #8c8c8c;
  border-width: 1px 0;
  background: #c0c0c0;
`;
const Captions = styled.div`
  display: flex;
  justify-content: space-between;
  width: 150px;
  height: 16px;
`;
const SpinRow = styled.div<{ $w: number; $h: number }>`
  display: flex;
  width: ${(p) => p.$w}px;
  height: ${(p) => p.$h}px;
  border: 1px solid #777;
  border-left: 0;
  background: #fff;
`;
const BigInput = styled.input`
  flex: 1;
  width: 100%;
  min-width: 0;
  padding: 0 4px 0 0;
  border: 0;
  outline: 0;
  background: none;
  text-align: right;
  font-size: 43px;
  line-height: 48px;
  font-weight: bold;
  color: #000;
`;
const Spinner = styled.div`
  display: flex;
  flex-direction: column;
  width: 16px;
  border-left: 1px solid #777;
`;
const SpinButton = styled.button<{ $down?: boolean }>`
  display: flex;
  align-items: center;
  justify-content: center;
  flex: 1;
  padding: 0;
  border: 0;
  border-top: ${(p) => (p.$down ? "1px solid #777" : "0")};
  background: ${(p) => (p.$down ? "linear-gradient(#d8d8d8, #c0c0c0)" : "linear-gradient(#fff, #e0e0e0)")};
`;
const Arrow = ({ down }: { down?: boolean }) => <Block width="10" height="5"><path d={down ? "M0.500 0h9L5 5z" : "M0.500 5h9L5 0z"} fill="#333" /></Block>;
const Spin = () => (
  <Spinner>
    <SpinButton type="button" aria-label="Increase"><Arrow /></SpinButton>
    <SpinButton type="button" aria-label="Decrease" $down><Arrow down /></SpinButton>
  </Spinner>
);
const OctaveRow = styled.div`
  display: flex;
  gap: 4px;
  margin-top: 2px;
`;
const OctaveButton = styled.button<{ $w: number; $cut?: boolean }>`
  display: flex;
  align-items: center;
  justify-content: ${(p) => (p.$cut ? "flex-end" : "center")};
  width: ${(p) => p.$w}px;
  height: 23px;
  padding: ${(p) => (p.$cut ? "0 19px 0 0" : "0")};
  border: 1px solid #666;
  border-left-width: ${(p) => (p.$cut ? 0 : 1)}px;
  border-radius: ${(p) => (p.$cut ? "0 4px 4px 0" : "4px")};
  background: linear-gradient(#fafafa, #d0d0d0);
  white-space: nowrap;
`;
const LevelPanel = styled.div`
  flex: none;
  height: 93px;
  margin-top: 41px;
  padding-top: 4px;
  border: solid #8c8c8c;
  border-width: 1px 0;
  background: #bcbcbc;
`;
const LevelField = styled.div`
  display: flex;
  flex-direction: column;
  flex: 1;
  min-width: 0;
`;
const LevelNote = styled.div`
  display: flex;
  justify-content: space-between;
  height: 16px;
  padding: 1px 4px 0 0;
`;
const ScopeView = styled.div`
  flex: none;
  margin-top: 16px;
  border: solid #f4f4f4;
  border-width: 4px 0 2px;
`;
const SpeakerFooter = styled.div`
  display: flex;
  flex: none;
  margin-top: 2px;
  padding-top: 17px;
  border-top: 1px solid #999;
`;
const FooterTrack = styled.div`
  width: 208px;
  height: 12px;
  border: solid #555;
  border-width: 2px 1px 0 0;
  background: #bababa;
`;
const FooterRest = styled.div`
  flex: 1;
  border-top: 1px solid #999;
  background: #f4f4f4;
`;
const CloseRed = styled.span`
  width: 45px;
  height: 18px;
  margin-right: 4px;
  background: #c75050;
`;
const sine: Pt[] = Array.from({ length: 246 }, (_, x) => [x, 56 - 46 * Math.cos(((x - 72.7) / 107) * 2 * Math.PI)]);

const Speaker = () => (
  <SpeakerWindow $x={0} $y={479} $w={490} $h={594}>
    <TitleBar $h={29} $bg="#5cb98c" $pad={65} $color="#1f4f3a">
      <TitleText $line={27}>SPEAKER on Динамики (E-</TitleText>
      <CloseRed />
    </TitleBar>
    <SpeakerTabs $big>
      <SpeakerTab type="button" $big $on $w={72}>nes</SpeakerTab>
      <SpeakerTab type="button" $big $w={137}>Multitone</SpeakerTab>
      <SpeakerTab type="button" $big $w={137} />
    </SpeakerTabs>
    <SpeakerTabs>
      <SpeakerTab type="button" $on $w={26} aria-label="Sine" />
      <SpeakerTab type="button" $w={91}>Square</SpeakerTab>
      <SpeakerTab type="button" $w={91}>Sawtooth</SpeakerTab>
      <SpeakerTab type="button" $w={91}>Tone burst</SpeakerTab>
    </SpeakerTabs>
    <FrequencyPanel>
      <Captions><span>Hz</span><span>Actual: 999,95 Hz</span></Captions>
      <SpinRow $w={153} $h={68}>
        <BigInput aria-label="Frequency" defaultValue="1 000" />
        <Spin />
      </SpinRow>
      <OctaveRow>
        <OctaveButton type="button" $w={44} $cut>3 Oct.</OctaveButton>
        <OctaveButton type="button" $w={105}>Next 1/3 Oct.</OctaveButton>
      </OctaveRow>
    </FrequencyPanel>
    <LevelPanel>
      <SpinRow $w={241} $h={83}>
        <LevelField>
          <LevelNote><span /><span>RMS</span></LevelNote>
          <BigInput aria-label="Level" defaultValue="-1,00 dBV" />
          <LevelNote><span>pk</span><span>2,01 dBV pk</span></LevelNote>
        </LevelField>
        <Spin />
      </SpinRow>
    </LevelPanel>
    <ScopeView>
      <Block width="490" height="112">
        <rect width="490" height="112" fill="#282828" />
        <path d="M0 57.500h490" stroke="#888" />
        <path d={toPath(sine)} fill="none" stroke="#8a8a8a" strokeWidth="1.600" />
      </Block>
    </ScopeView>
    <SpeakerFooter><FooterTrack /><FooterRest /></SpeakerFooter>
  </SpeakerWindow>
);

/* ---------- microphone window ---------- */

const MicWindow = styled(Layer)`
  display: flex;
  flex-direction: column;
  padding-left: 4px;
  background: #ebebeb;
`;
const MicClient = styled.div`
  display: flex;
  flex-direction: column;
  flex: 1;
  border: solid #dcdcdc;
  border-width: 1px 1px 0 0;
  background: linear-gradient(#fdfdfd, #fafafa 50px, #dadada);
`;
const MicToolbar = styled.div`
  display: flex;
  flex: none;
  align-items: center;
  gap: 10px;
  height: 46px;
  padding: 0 0 0 25px;
`;
const ToolSet = styled.div<{ $gap: number; $before?: number }>`
  display: flex;
  align-items: center;
  gap: ${(p) => p.$gap}px;
  margin-left: ${(p) => p.$before ?? 0}px;
`;
const PushButton = styled.button<{ $w: number; $pressed?: boolean; $off?: boolean }>`
  display: flex;
  flex-direction: column;
  align-items: center;
  justify-content: center;
  width: ${(p) => p.$w}px;
  height: 42px;
  padding: 0;
  border: 1px solid #6a6a6a;
  border-radius: 5px;
  background: ${(p) => (p.$pressed ? "linear-gradient(#8e8e8e, #b4b4b4 6px, #c8c8c8)" : "linear-gradient(#fbfbfb, #c6c6c6)")};
  color: ${(p) => (p.$off ? "#b8b8b8" : "#111")};
  line-height: 15px;
`;
const IconGap = styled.span`
  height: 19px;
`;
const VrmsField = styled.label`
  display: flex;
  flex-direction: column;
  gap: 6px;
  width: 70px;
  line-height: 13px;
`;
const VrmsInput = styled.input`
  width: 70px;
  height: 21px;
  padding: 0 0 0 11px;
  border: 1px solid #777;
  background: linear-gradient(135deg, #333 5px, #fff 5px);
`;
const MicBody = styled.div`
  display: flex;
  flex: none;
  height: 511px;
  padding-left: 3px;
`;
const VScroll = styled.div`
  display: flex;
  flex-direction: column;
  flex: none;
  width: 16px;
  height: 474px;
  margin-top: 15px;
  border: 1px solid #888;
  background: #fff;
`;
const ScrollButton = styled.button<{ $bottom?: boolean }>`
  display: flex;
  align-items: center;
  justify-content: center;
  height: 15px;
  padding: 0;
  border: solid #888;
  border-width: ${(p) => (p.$bottom ? "1px 0 0" : "0 0 1px")};
  background: linear-gradient(#fff, #d0d0d0);
`;
const Thumb = styled.div`
  height: 155px;
  margin: 102px 0 auto;
  border: solid #888;
  border-width: 1px 0;
  background: linear-gradient(90deg, #fafafa, #c4c4c4);
`;
const HScroll = styled.div`
  display: flex;
  flex: none;
  justify-content: space-between;
  width: 843px;
  height: 10px;
  margin-left: 58px;
  border-top: 1px solid #888;
  background: #fff;
`;
const HButton = styled.button`
  width: 16px;
  padding: 0;
  border: 1px solid #888;
  border-width: 0 1px;
  background: linear-gradient(#fff, #d8d8d8);
  overflow: hidden;
`;
const TitleIcon = styled.span`
  padding: 3px 5px 0 3px;
`;

const Microphone = () => (
  <MicWindow $x={245} $y={481} $w={926} $h={592}>
    <TitleBar $h={26} $bg="#ebebeb">
      <TitleIcon><JavaIcon /></TitleIcon>
      <TitleText>MICROPHONE (Общая громкость) R on Микрофон (E-MU 0202 | USB) at 44.1 kHz, 65 536-point Spectrum, Dolph-Che...</TitleText>
      <WinButton type="button" aria-label="Minimize"><Block width="8" height="16"><path d="M0 9.500h8" stroke="#222" strokeWidth="2" /></Block></WinButton>
      <WinButton type="button" aria-label="Maximize"><Block width="10" height="16"><path d="M0.700 3.500h8.600v6.500H0.700zM0 3h10" fill="none" stroke="#222" strokeWidth="1.400" /></Block></WinButton>
      <WinButton type="button" aria-label="Close" $close><CloseGlyph /></WinButton>
    </TitleBar>
    <MicClient>
      <MicToolbar>
        <ToolSet $gap={6}>
          <CameraIcon />
          <PushButton type="button" $w={56} $pressed>Show<br />distortion</PushButton>
        </ToolSet>
        <ToolSet $gap={20} $before={10}>
          <PushButton type="button" $w={60}>Reset<br />averaging</PushButton>
          <PushButton type="button" $w={38} $off disabled><IconGap><Block width="16" height="14"><path d="M1 2q0-1 1-1h4l1 2h7q1 0 1 1v9H1z" fill="#a8a8a8" /></Block></IconGap>WAV</PushButton>
        </ToolSet>
        {["Current", "Peak", "Both"].map((t) => <PushButton key={t} type="button" $w={48}><IconGap><FloppyIcon /></IconGap>{t}</PushButton>)}
        <ToolSet $gap={20} $before={10}>
          <PushButton type="button" $w={44} aria-label="Input">
            <Block width="30" height="30"><rect x="4" y="1" width="24" height="28" fill="#fff" stroke="#000" strokeWidth="2" /><path d="M4 6v18" stroke="#fff" strokeWidth="3" /><path d="M0 9.500h9M6 6l4 3.500L6 13M0 21.500h9M6 18l4 3.500L6 25" fill="none" stroke="#000" strokeWidth="2" /></Block>
          </PushButton>
          <PushButton type="button" $w={52}>Stepped<br />sine</PushButton>
          <PushButton type="button" $w={54}>Calibrate<br />level</PushButton>
        </ToolSet>
        <VrmsField>FS sine Vrms<VrmsInput defaultValue="1,0000 V" /></VrmsField>
        <ToolSet $gap={12} $before={16}>
          <ScrollbarsIcon /><FreqAxisIcon /><LimitsIcon /><GearIcon />
        </ToolSet>
      </MicToolbar>
      <MicBody>
        <VScroll>
          <ScrollButton type="button" aria-label="Scroll up"><Arrow /></ScrollButton>
          <Thumb />
          <ScrollButton type="button" aria-label="Scroll down" $bottom><Arrow down /></ScrollButton>
        </VScroll>
        <Spectrum data={first} />
      </MicBody>
      <HScroll>
        <HButton type="button" aria-label="Scroll left"><Block width="14" height="7"><path d="M10 2v5H5z" fill="#333" /></Block></HButton>
        <HButton type="button" aria-label="Scroll right"><Block width="14" height="7"><path d="M5 2v5h5z" fill="#333" /></Block></HButton>
      </HScroll>
    </MicClient>
  </MicWindow>
);

/* ---------- partly hidden windows ---------- */

const GreenEdge = styled(Layer)`
  border: solid #5a9c7c;
  border-width: 2px 2px 0 0;
  background: #fff;
`;
const GreyEdge = styled(Layer)`
  border: solid #ebebeb;
  border-width: 5px 7px 0 0;
  box-shadow: 1px -1px #cacaca;
  background: #fff;
`;
const GreyClose = styled.div`
  width: 45px;
  height: 5px;
  background: #bcbcbc;
`;
const SecondPanel = styled(Layer)`
  background: linear-gradient(#f9f9f9, #dcdcdc);
`;
const CutButton = styled.div`
  height: 43px;
  border: solid #666;
  border-width: 3px 0 1px 2px;
  border-radius: 5px 0 0 5px;
  background: #b8b8b8;
`;
const EdgeStrip = styled.div`
  height: 100%;
  background: linear-gradient(transparent 292px, #000 292px, #000 358px, #ccc 358px, #ddd 378px, #fff 378px),
    repeating-linear-gradient(#fff 0, #fff 6px, #ccc 6px, #ccc 7px);
`;

export default function App() {
  return (
    <Desktop>
      <Global />
      <Headline>искажения УНЧ на АС 6 В 4 Ом питание +-39В</Headline>
      <Layer $x={350} $y={76} $w={1031}><ThdChart /></Layer>
      <Rew />
      <GreenEdge $x={79} $y={467} $w={573} $h={14} />
      <GreyEdge $x={789} $y={477} $w={935} $h={596} />
      <Layer $x={1672} $y={476} $w={45}><GreyClose /></Layer>
      <Speaker />
      <Microphone />
      <SecondPanel $x={1080} $y={552} $right={10} $h={509}><Spectrum data={second} /></SecondPanel>
      <Layer $x={1911} $y={569} $w={9}><CutButton /></Layer>
      <Layer $x={1928} $y={340} $right={0} $h={400}><EdgeStrip /></Layer>
    </Desktop>
  );
}
